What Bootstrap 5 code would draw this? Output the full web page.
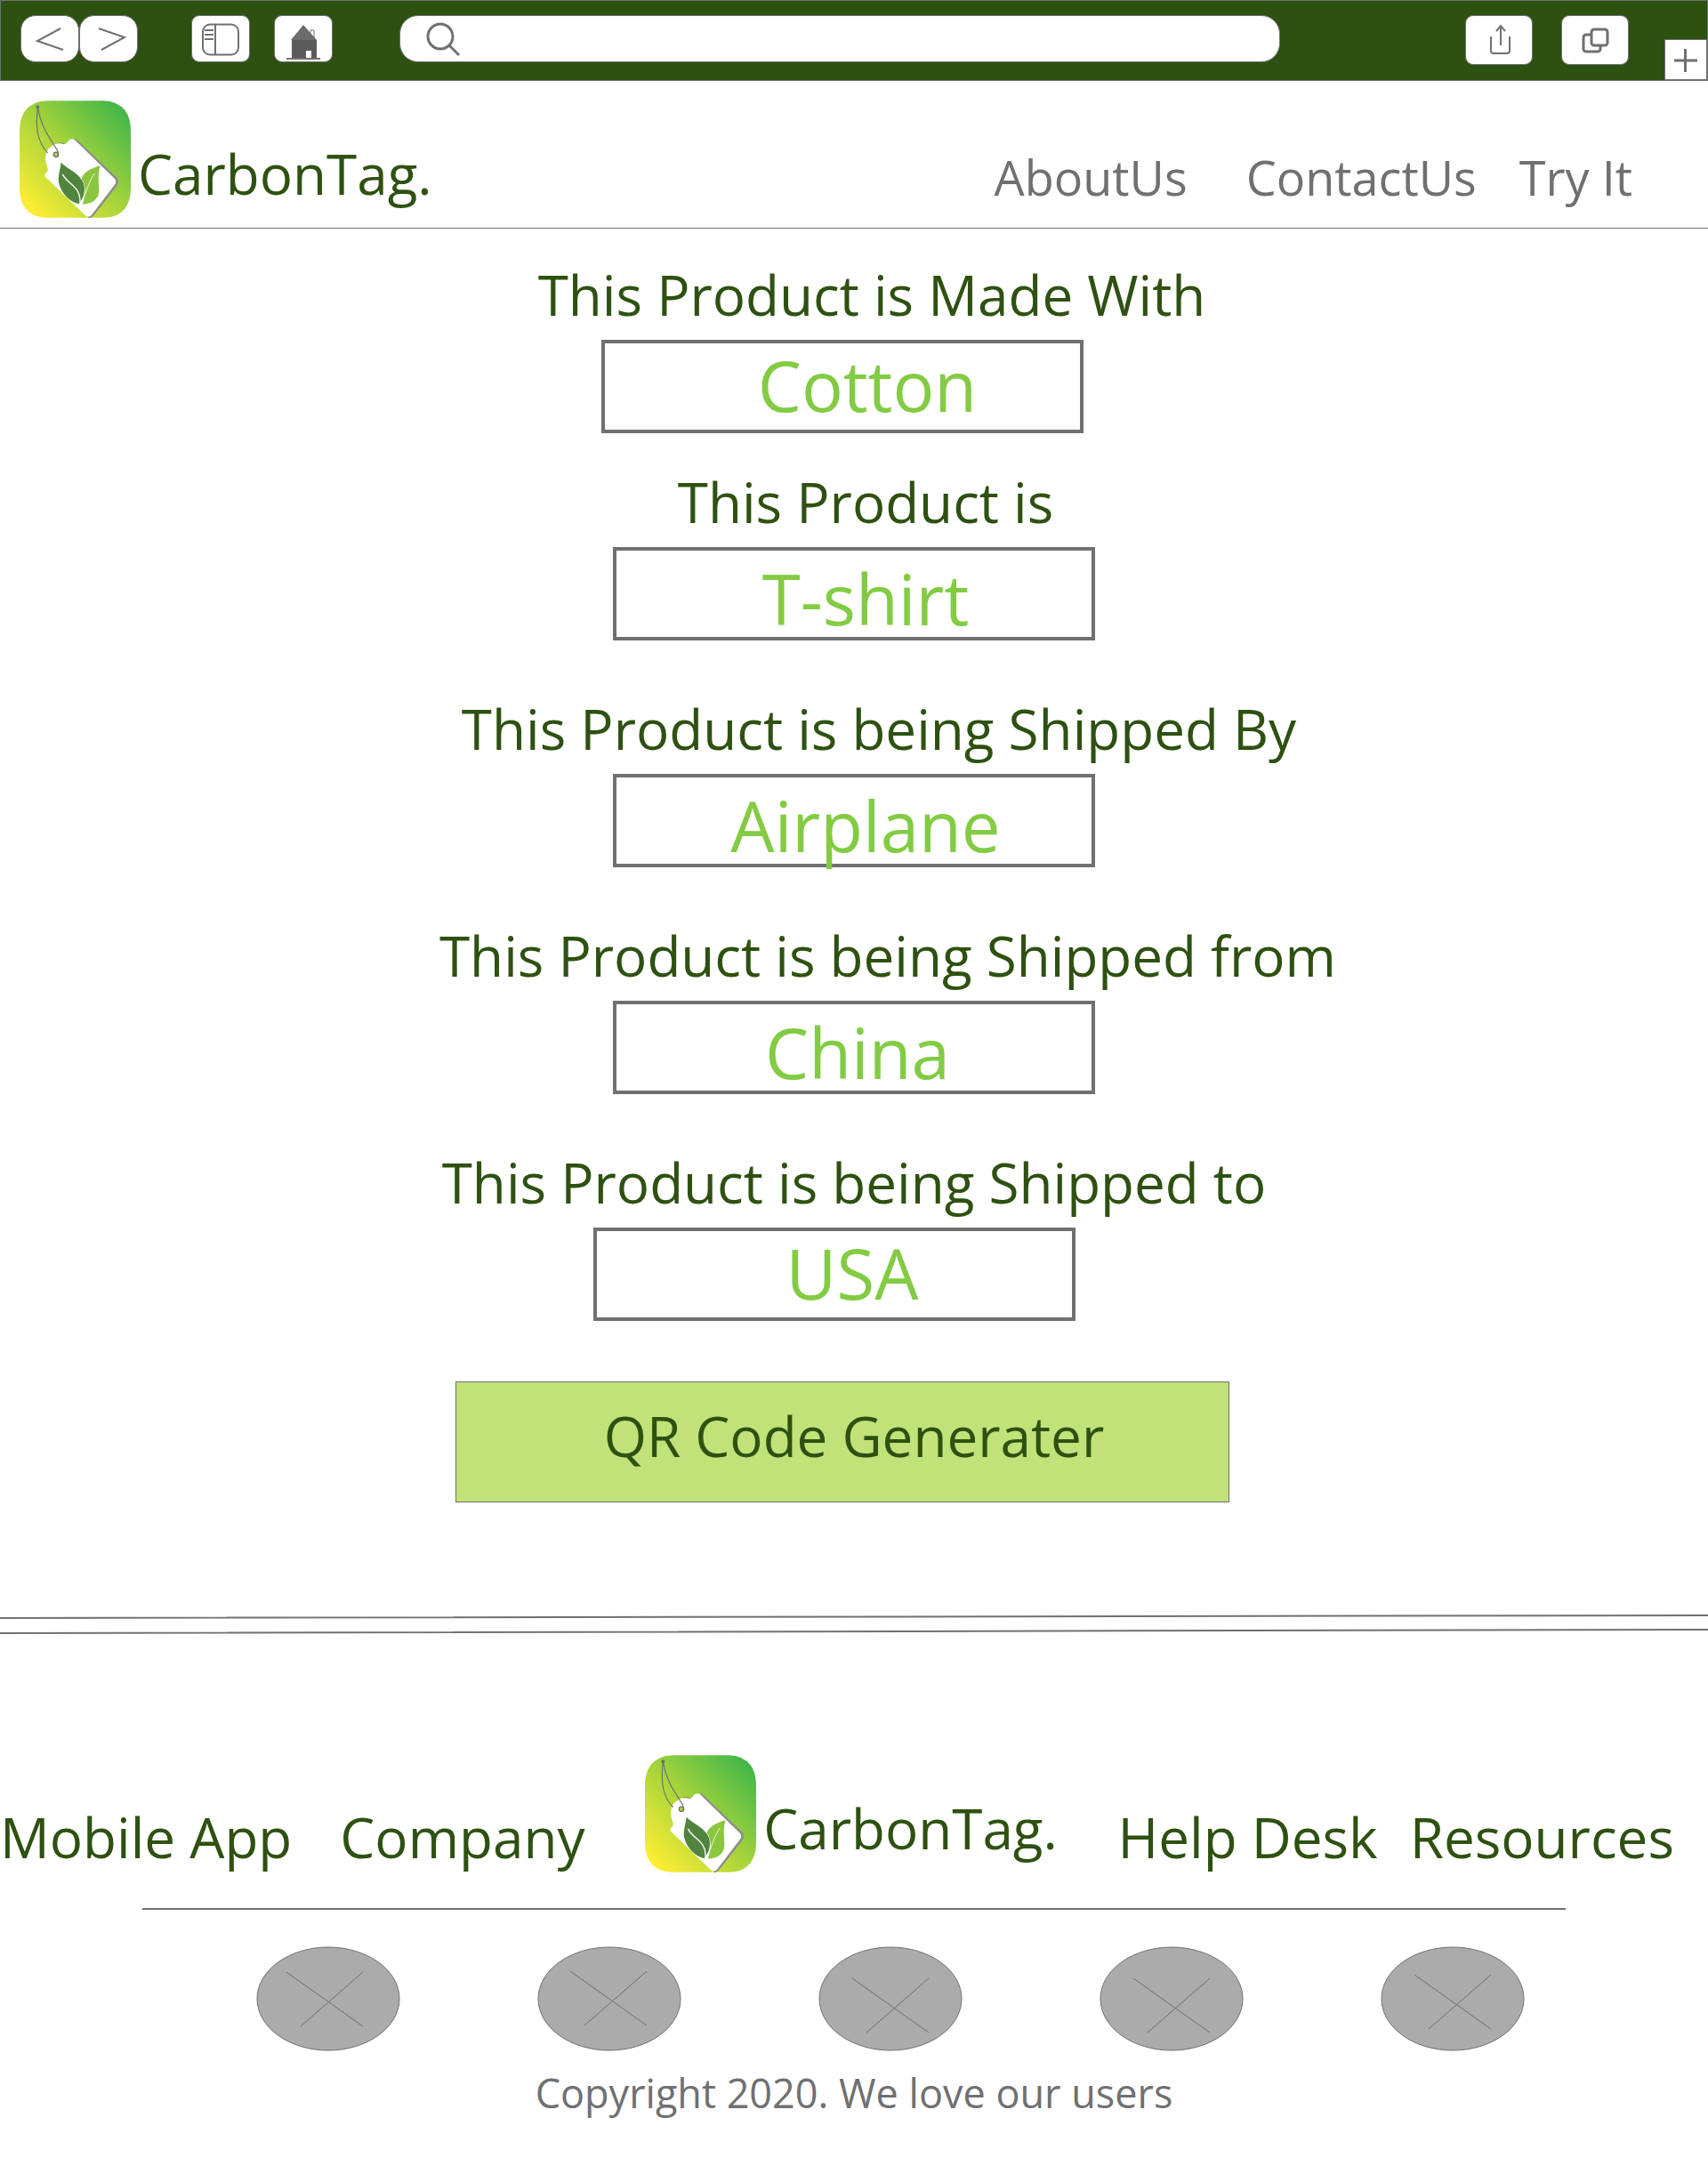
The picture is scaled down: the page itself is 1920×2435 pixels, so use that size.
<!DOCTYPE html>
<html lang="en">
<head>
<meta charset="utf-8">
<meta name="viewport" content="width=device-width, initial-scale=1">
<title>CarbonTag.</title>
<link href="https://cdn.jsdelivr.net/npm/bootstrap@5.3.0/dist/css/bootstrap.min.css" rel="stylesheet">
<style>
  :root { --leaf: #2e5111; --ink: #707070; --lime: #82cb43; }
  body { font-family: "Open Sans", "Noto Sans", sans-serif; color: var(--leaf); background: #fff; }
  a { text-decoration: none; color: inherit; }
  svg { display: block; flex: none; }

  .browser-bar { background: var(--leaf); border: 1px solid var(--ink); height: 91px; padding: 16px 0 0 22px; }
  .tool { background: #fff; border: 1px solid var(--ink); padding: 0; height: 53px; width: 66px; border-radius: 9px; flex: none; }
  .tool svg { margin: -1px; }
  .tool-round { border-radius: 17px; }
  .tool-wide { width: 76px; height: 56px; }
  .tool-tab { width: 48px; height: 46px; border-radius: 0; }
  .tool-gap-lg { margin-left: 60px; }
  .tool-gap-md { margin-left: 40px; }
  .tool-gap-sm { margin-left: 32px; }
  .tool-gap-xs { margin-left: 27px; }
  .address { background: #fff; border: 1px solid var(--ink); border-radius: 21px; height: 53px; margin-left: 75px; margin-right: 208px; }
  .address input { border: 0; outline: 0; background: transparent; font-size: 24px; min-width: 0; }
  .line-art { fill: none; stroke: var(--ink); stroke-width: 2; }

  .site-header { border-bottom: 1px solid var(--ink); padding: 22px 85px 11px 22px; }
  .title-text { font-size: 62px; line-height: 84px; }
  .brand-name { margin: 0 0 8px 8px; }
  .site-nav { color: var(--ink); font-size: 54px; line-height: 74px; margin-bottom: 9px; }
  .nav-middle { margin: 0 48px 0 66px; }

  .product-form { padding-top: 32px; padding-bottom: 125px; }
  .entry { margin-bottom: 57px; }
  .entry-first { margin-bottom: 35px; }
  .entry-last { margin-bottom: 68px; }
  .entry label { margin-bottom: 9px; }
  .entry-box { width: 542px; max-width: 100%; height: 105px; border: 4px solid var(--ink); }
  .entry-box input { display: block; width: 100%; height: 102px; margin-top: -4px; border: 0; outline: 0;
    background: transparent; color: var(--lime); font-size: 78px; line-height: 102px; text-align: center; padding: 0; }
  .entry-box .sits-low { height: 116px; }
  .start-8 { padding-left: 8px !important; }
  .start-26 { padding-left: 26px !important; }
  .start-40 { padding-left: 40px !important; }
  .start-56 { padding-left: 56px !important; }
  .start-76 { padding-left: 76px !important; }
  .end-26 { padding-right: 26px; }
  .end-44 { padding-right: 44px; }
  .generate { width: 870px; max-width: 100%; height: 136px; background: #c1e279; border: 1px solid var(--ink); color: var(--leaf); padding: 0 0 14px; }

  .footer-links { padding: 135px 38px 0 0; }
  .footer-left { gap: 54px; }
  .footer-right { gap: 36px; }
  .footer-brand { margin-bottom: 2px; }
  .footer-rule { width: 1600px; max-width: 84%; height: 2px; background: var(--ink); margin: 38px auto 0; }
  .socials { gap: 154px; padding-left: 82px; margin-top: 41px; }
  .socials ellipse { fill: #ababab; stroke: var(--ink); }
  .copyright { color: var(--ink); font-size: 45px; line-height: 60px; margin: 17px 0 52px; }
</style>
<script src="https://cdn.jsdelivr.net/npm/bootstrap@5.3.0/dist/js/bootstrap.bundle.min.js"></script>
</head>
<body>

<svg width="0" height="0" class="position-absolute" aria-hidden="true">
  <defs>
    <linearGradient id="fade" x1="0.1" y1="0.95" x2="0.95" y2="0.08">
      <stop offset="0" stop-color="#fdee33"/>
      <stop offset="0.5" stop-color="#a5d33c"/>
      <stop offset="1" stop-color="#41b649"/>
    </linearGradient>
    <symbol id="logo" viewBox="36 39 375 395">
      <path d="M128 39H320Q366 40 392 72Q411 98 411 140V335Q411 376 392 402Q366 434 320 434H128Q82 434 55 402Q36 376 36 335V140Q36 98 55 72Q82 40 128 39Z" fill="url(#fade)"/>
      <path d="M222 169L362 302Q369 312 361 324L282 425Q276 431 268 430" fill="none" stroke="#8d8d8d" stroke-width="8"/>
      <path d="M164 183Q178 179 190 186" fill="none" stroke="#777" stroke-width="3"/>
      <path d="M213 168Q220 168 226 175L356 302Q364 312 357 322L280 423Q270 435 258 426L122 295Q118 288 126 282Q134 276 130 264Q119 240 126 215Q130 203 140 195Q160 180 178 184Q193 188 198 178Q204 168 213 168Z" fill="#fff"/>
      <circle cx="159" cy="221" r="8" fill="#b8d53a" stroke="#707070" stroke-width="4"/>
      <circle cx="97" cy="60" r="6" fill="#707070"/>
      <path d="M97 60C90 120 92 175 131 215M98 60C104 120 140 170 158 197Q172 217 163 229" fill="none" stroke="#707070" stroke-width="3.5"/>
      <path d="M176 248C195 268 240 285 252 318C262 350 245 375 236 387C205 380 175 350 168 315C165 295 173 270 176 248Z" fill="#51853f"/>
      <path d="M308 258C270 268 248 285 245 302C262 325 260 360 248 388C280 388 302 372 304 345C304 310 298 290 308 258Z" fill="#8bc63f"/>
      <path d="M181 287C200 325 244 325 240 388" fill="none" stroke="#fff" stroke-width="4"/>
      <path d="M289 284C268 315 264 340 254 362" fill="none" stroke="#fff" stroke-width="2.5"/>
    </symbol>
    <symbol id="cross" viewBox="0 0 87 62" overflow="visible">
      <path d="M0 0L86 61M86 0L16 61" fill="none" stroke="#707070"/>
    </symbol>
  </defs>
</svg>

<div class="browser-bar d-flex align-items-start" role="toolbar" aria-label="Browser">
  <button class="tool tool-round" type="button" aria-label="Back"><svg width="66" height="53" class="line-art"><path d="M45 15L19 29L48 39"/></svg></button>
  <button class="tool tool-round" type="button" aria-label="Forward"><svg width="66" height="53" class="line-art"><path d="M22 15L51 25L25 39"/></svg></button>
  <button class="tool tool-gap-lg" type="button" aria-label="Sidebar"><svg width="66" height="53" class="line-art"><rect x="13" y="10.500" width="40" height="34" rx="8"/><path d="M27 11V44M15 17H25M15 22H25M15 27H25"/></svg></button>
  <button class="tool tool-gap-xs" type="button" aria-label="Home"><svg width="66" height="53"><path d="M41 24V17H45V28" fill="#fff" stroke="#707070"/><path d="M19 28L33 11L48 28Z" fill="#6b6b6b"/><path d="M20 28H48V48H20Z" fill="#5b5b5b"/><path d="M36 40H42V48H36Z" fill="#fff"/><path d="M14 49H52" stroke="#707070" stroke-width="2"/></svg></button>
  <div class="address d-flex align-items-center flex-grow-1">
    <svg width="76" height="53" fill="none" stroke="#707070" stroke-width="3"><circle cx="45" cy="24" r="14"/><path d="M55 34L66 45"/></svg>
    <input class="flex-grow-1" type="text" aria-label="Address">
  </div>
  <button class="tool tool-wide" type="button" aria-label="Share"><svg width="76" height="56" class="line-art"><path d="M29 24V40Q29 43 32 43H47Q50 43 50 40V24M40 34V12M35 18L40 12L45 18"/></svg></button>
  <button class="tool tool-wide tool-gap-sm" type="button" aria-label="Tabs"><svg width="76" height="56" fill="#fff" stroke="#707070" stroke-width="3"><rect x="25" y="22" width="19" height="19" rx="3"/><rect x="34" y="16" width="18" height="18" rx="3"/></svg></button>
  <button class="tool tool-tab tool-gap-md align-self-end" type="button" aria-label="New tab"><svg width="48" height="46" fill="none" stroke="#707070" stroke-width="3"><path d="M23.500 11V37M11 24H37"/></svg></button>
</div>

<header class="site-header d-flex justify-content-between align-items-end">
  <a href="#" class="d-flex align-items-end">
    <svg width="125" height="132" role="img" aria-label="CarbonTag logo"><use href="#logo"/></svg>
    <span class="title-text brand-name">CarbonTag.</span>
  </a>
  <nav class="site-nav d-flex">
    <a href="#about">AboutUs</a>
    <a href="#contact" class="nav-middle">ContactUs</a>
    <a href="#try">Try It</a>
  </nav>
</header>

<main>
  <form class="product-form d-flex flex-column align-items-center">
    <div class="entry entry-first d-flex flex-column align-items-center">
      <label for="material" class="title-text start-40">This Product is Made With</label>
      <div class="end-26"><div class="entry-box"><input id="material" type="text" class="start-56" value="Cotton"></div></div>
    </div>
    <div class="entry d-flex flex-column align-items-center">
      <label for="kind" class="title-text start-26">This Product is</label>
      <div class="entry-box"><input id="kind" type="text" class="start-26 sits-low" value="T-shirt"></div>
    </div>
    <div class="entry d-flex flex-column align-items-center">
      <label for="carrier" class="title-text start-56">This Product is being Shipped By</label>
      <div class="entry-box"><input id="carrier" type="text" class="start-26 sits-low" value="Airplane"></div>
    </div>
    <div class="entry d-flex flex-column align-items-center">
      <label for="origin" class="title-text start-76">This Product is being Shipped from</label>
      <div class="entry-box"><input id="origin" type="text" class="start-8 sits-low" value="China"></div>
    </div>
    <div class="entry entry-last d-flex flex-column align-items-center">
      <label for="destination" class="title-text">This Product is being Shipped to</label>
      <div class="end-44"><div class="entry-box"><input id="destination" type="text" class="start-40" value="USA"></div></div>
    </div>
    <div class="end-26"><button type="button" class="generate title-text start-26">QR Code Generater</button></div>
  </form>
</main>

<footer>
  <svg width="100%" height="24" viewBox="0 0 1920 24" preserveAspectRatio="none" fill="none" stroke="#707070" stroke-width="2"><path d="M0 5L1920 2M0 22L1920 18"/></svg>
  <div class="footer-links title-text d-flex justify-content-between align-items-end">
    <div class="footer-left d-flex"><a href="#app">Mobile App</a><a href="#company">Company</a></div>
    <a href="#" class="footer-brand d-flex align-items-end">
      <svg width="125" height="132" role="img" aria-label="CarbonTag logo"><use href="#logo"/></svg>
      <span class="brand-name">CarbonTag.</span>
    </a>
    <div class="footer-right d-flex"><a href="#help">Help Desk</a><a href="#resources">Resources</a></div>
  </div>
  <div class="footer-rule"></div>
  <div class="socials d-flex justify-content-center">
    <a href="#s1" aria-label="Social link 1"><svg width="162" height="118"><ellipse cx="81" cy="59" rx="80" ry="58"/><use href="#cross" x="34" y="29" width="87" height="62"/></svg></a>
    <a href="#s2" aria-label="Social link 2"><svg width="162" height="118"><ellipse cx="81" cy="59" rx="80" ry="58"/><use href="#cross" x="37" y="28" width="87" height="62"/></svg></a>
    <a href="#s3" aria-label="Social link 3"><svg width="162" height="118"><ellipse cx="81" cy="59" rx="80" ry="58"/><use href="#cross" x="38" y="36" width="87" height="62"/></svg></a>
    <a href="#s4" aria-label="Social link 4"><svg width="162" height="118"><ellipse cx="81" cy="59" rx="80" ry="58"/><use href="#cross" x="38" y="36" width="87" height="62"/></svg></a>
    <a href="#s5" aria-label="Social link 5"><svg width="162" height="118"><ellipse cx="81" cy="59" rx="80" ry="58"/><use href="#cross" x="38" y="32" width="87" height="62"/></svg></a>
  </div>
  <p class="copyright text-center">Copyright 2020. We love our users</p>
</footer>
</body>
</html>
